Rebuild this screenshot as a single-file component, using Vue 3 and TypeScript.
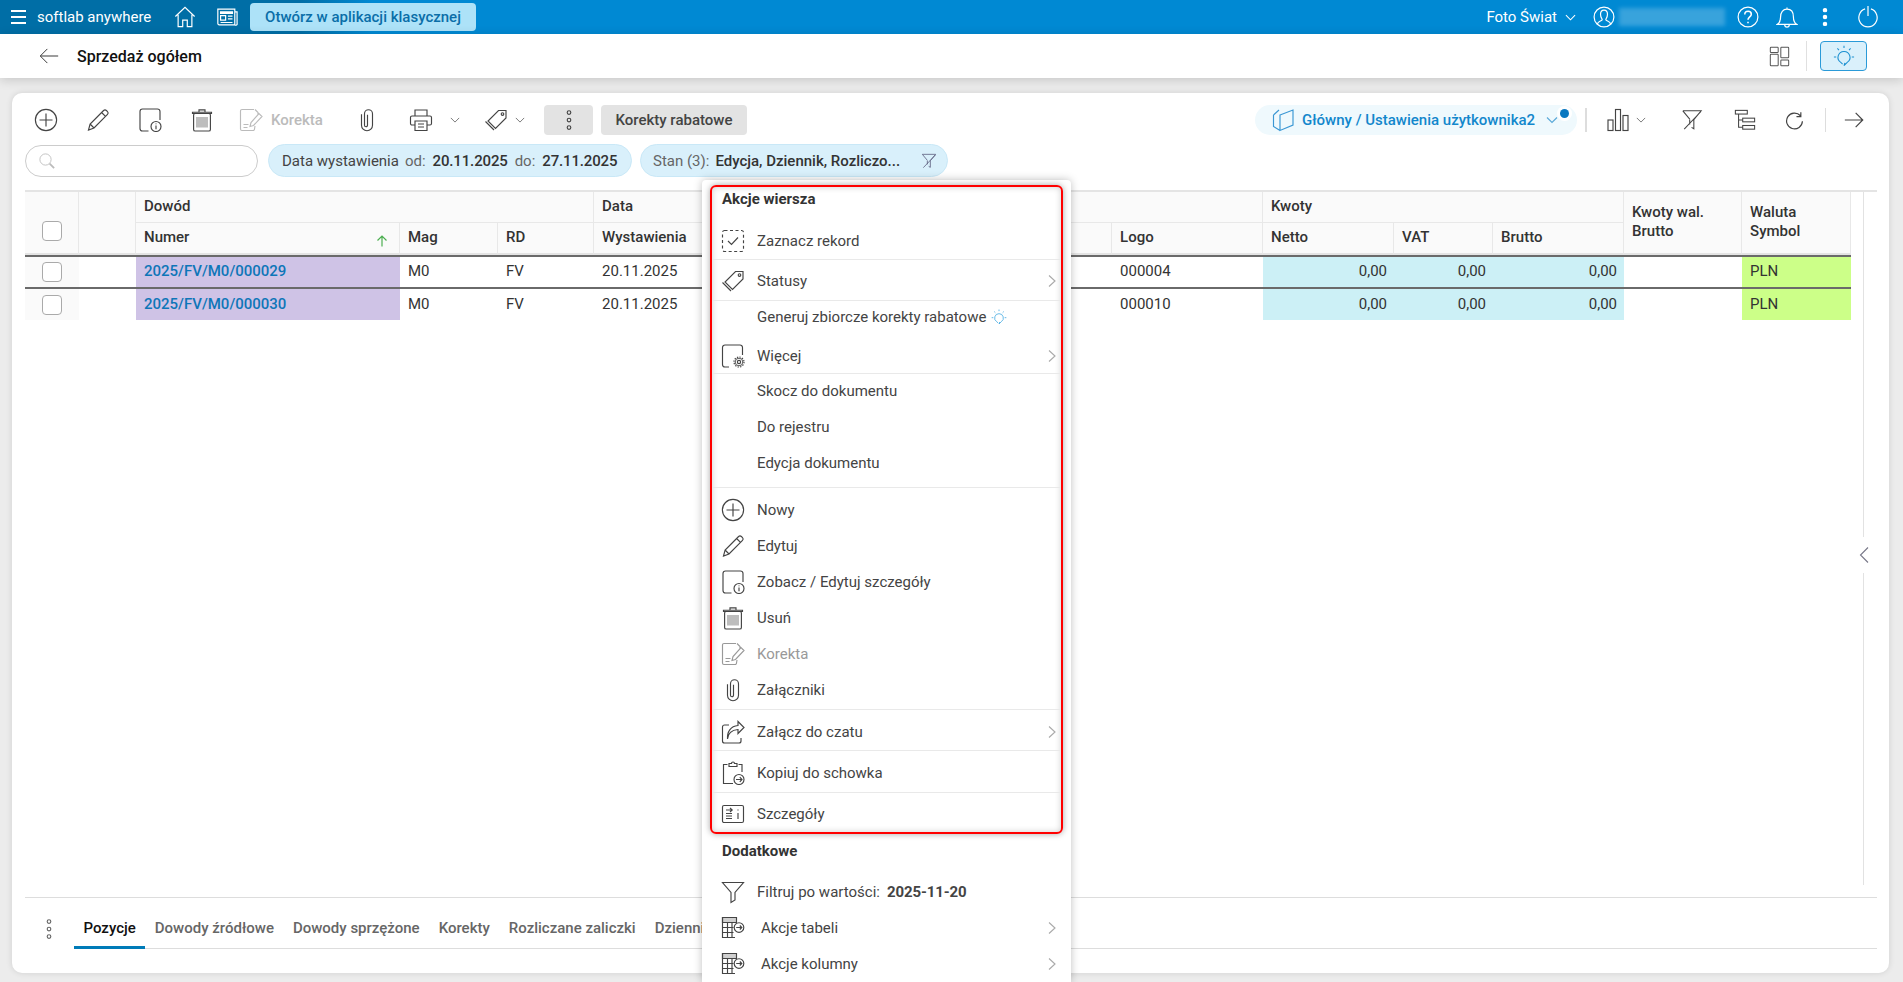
<script setup lang="ts">
interface Cell { text: string; cls?: string }
interface Item { label: string; icon?: string; cls?: string; more?: boolean; dim?: boolean; bulb?: boolean; value?: string }

const rows: Cell[][] = [
  [
    { text: '2025/FV/M0/000029', cls: 'link purple' }, { text: 'M0' }, { text: 'FV' }, { text: '20.11.2025' }, { text: '000004' },
    { text: '0,00', cls: 'num cyan' }, { text: '0,00', cls: 'num cyan' }, { text: '0,00', cls: 'num cyan' }, { text: '' }, { text: 'PLN', cls: 'lime' }
  ],
  [
    { text: '2025/FV/M0/000030', cls: 'link purple' }, { text: 'M0' }, { text: 'FV' }, { text: '20.11.2025' }, { text: '000010' },
    { text: '0,00', cls: 'num cyan' }, { text: '0,00', cls: 'num cyan' }, { text: '0,00', cls: 'num cyan' }, { text: '' }, { text: 'PLN', cls: 'lime' }
  ]
]

const tabs = ['Pozycje', 'Dowody źródłowe', 'Dowody sprzężone', 'Korekty', 'Rozliczane zaliczki', 'Dziennik']

const rowActions: Item[] = [
  { label: 'Zaznacz rekord', icon: 'i-check', cls: 'first sep' },
  { label: 'Statusy', icon: 'i-tags', cls: 'tall sep', more: true },
  { label: 'Generuj zbiorcze korekty rabatowe', cls: 'short', bulb: true },
  { label: 'Więcej', icon: 'i-gear', cls: 'tall-b sep', more: true },
  { label: 'Skocz do dokumentu', cls: 'up' },
  { label: 'Do rejestru', cls: 'up' },
  { label: 'Edycja dokumentu', cls: 'end sep' },
  { label: 'Nowy', icon: 'i-plus', cls: 'start' },
  { label: 'Edytuj', icon: 'i-pencil' },
  { label: 'Zobacz / Edytuj szczegóły', icon: 'i-info' },
  { label: 'Usuń', icon: 'i-trash' },
  { label: 'Korekta', icon: 'i-fix', dim: true },
  { label: 'Załączniki', icon: 'i-clip', cls: 'clip sep' },
  { label: 'Załącz do czatu', icon: 'i-share', cls: 'tall-c sep', more: true },
  { label: 'Kopiuj do schowka', icon: 'i-board', cls: 'tall-d sep' },
  { label: 'Szczegóły', icon: 'i-details', cls: 'last' }
]

const extraActions: Item[] = [
  { label: 'Filtruj po wartości:', icon: 'i-funnel', value: '2025-11-20' },
  { label: 'Akcje tabeli', icon: 'i-table', cls: 'inset', more: true },
  { label: 'Akcje kolumny', icon: 'i-table', cls: 'inset', more: true }
]
</script>

<template>
  <div class="page">
    <svg class="defs" aria-hidden="true">
      <defs>
        <symbol id="i-plus" viewBox="0 0 24 24"><circle cx="12" cy="12" r="10.6" /><path d="M12 5.5v13M5.5 12h13" /></symbol>
        <symbol id="i-pencil" viewBox="0 0 24 24"><path d="M2.5 22l1.6-6L17.6 2.5a2 2 0 0 1 2.8 0l1.1 1.1a2 2 0 0 1 0 2.8L8 20zM15.6 4.5l3.9 3.9M4.1 16L8 20" /></symbol>
        <symbol id="i-info" viewBox="0 0 24 24"><path d="M10.5 23H4.5A2.5 2.5 0 0 1 2 20.5V3.5A2.5 2.5 0 0 1 4.5 1h15A2.5 2.5 0 0 1 22 3.5V12" /><circle cx="18" cy="18.5" r="5" /><path d="M18 17.5v3.8M18 15.4v.9" /></symbol>
        <symbol id="i-trash" viewBox="0 0 24 24"><path d="M2.5 5.5V4.2h19v1.3zM9 4V1.8h6V4" /><rect x="3.6" y="5.5" width="16.8" height="17.5" rx="1.6" /><path d="M7 9v10.5M9 9v10.5M11 9v10.5M13 9v10.5M15 9v10.5M17 9v10.5" stroke-width=".7" /></symbol>
        <symbol id="i-fix" viewBox="0 0 24 24"><path d="M15 1.5H3A1.5 1.5 0 0 0 1.5 3v18A1.5 1.5 0 0 0 3 22.5h11A1.5 1.5 0 0 0 15.500 21l.5-3M16 1.500l3 3v2M4.500 16.500h5M4.500 19.500h4M11 18.500l1-4L20 5.500l3 3-8.500 9z" /></symbol>
        <symbol id="i-clip" viewBox="0 0 24 24"><path d="M6.500 6v11a5.500 5.500 0 0 0 11 0V5.500a4 4 0 0 0-8 0V17a1.500 1.500 0 0 0 3 .0V6.500" transform="translate(0 .2)" /></symbol>
        <symbol id="i-print" viewBox="0 0 24 24"><path d="M6 8V2h12v6M6 17H3a1.500 1.500 0 0 1-1.500-1.500v-6A1.500 1.500 0 0 1 3 8h18a1.500 1.500 0 0 1 1.500 1.500v6A1.500 1.500 0 0 1 21 17h-3" /><path d="M6 13h12v9.500H6zM9 16h6M9 19h6" /></symbol>
        <symbol id="i-tags" viewBox="0 0 24 24"><path d="M14.500 2.500h7.500v7.500L11.500 20.500 4 13zM1.500 13.500L10 22" /><circle cx="18.500" cy="6" r="1.300" /></symbol>
        <symbol id="i-chev-d" viewBox="0 0 12 12"><path d="M1 3.500l5 5 5-5" /></symbol>
        <symbol id="i-chev-r" viewBox="0 0 12 12"><path d="M3 .5l6 5.500-6 5.500" /></symbol>
        <symbol id="i-kebab" viewBox="0 0 24 24"><circle cx="12" cy="4.500" r="1.800" /><circle cx="12" cy="12" r="1.800" /><circle cx="12" cy="19.500" r="1.800" /></symbol>
        <symbol id="i-lens" viewBox="0 0 24 24"><circle cx="10" cy="10" r="7.500" /><path d="M15.500 15.500l6 6" stroke-width="2.400" /></symbol>
        <symbol id="i-funnel" viewBox="0 0 24 24"><path d="M1.500 2.500h21L14 12.500V20l-4 2.500v-10z" /></symbol>
        <symbol id="i-funnel-off" viewBox="0 0 24 24"><path d="M2 2h20l-8 9.500v10l-2.500-1.500M3.500 22L21.500 3M2 2l7.500 9M9.500 11.500V17" /></symbol>
        <symbol id="i-bars" viewBox="0 0 24 24"><rect x="2" y="12" width="5" height="10.500" /><rect x="9.500" y="1.500" width="5" height="21" /><rect x="17" y="7.500" width="5" height="15" /></symbol>
        <symbol id="i-tree" viewBox="0 0 24 24"><rect x="1.500" y="1.500" width="13" height="4" /><rect x="9.500" y="10" width="13" height="4" /><rect x="9.500" y="18" width="13" height="4" /><path d="M5 5.500V20h4.500M5 12h4.500" /></symbol>
        <symbol id="i-refresh" viewBox="0 0 24 24"><path d="M19.500 6A10 10 0 1 0 22 13M20 1.500V7h-5.500" /></symbol>
        <symbol id="i-arrow-r" viewBox="0 0 24 24"><path d="M1 12h21M14 3.500L22.500 12 14 20.500" /></symbol>
        <symbol id="i-arrow-l" viewBox="0 0 24 24"><path d="M23 12H2M10 3.500L1.500 12 10 20.500" /></symbol>
        <symbol id="i-book" viewBox="0 0 24 24"><path d="M9 7L22 2V17L9 22.500zM2.500 7L8 2M2.500 7V18.500L9 22.500" /></symbol>
        <symbol id="i-check" viewBox="0 0 24 24"><rect x="1.500" y="1.500" width="21" height="21" rx="2" stroke-dasharray="3 2.500" /><path d="M7 12l3.500 3.500L17 8.500" /></symbol>
        <symbol id="i-gear" viewBox="0 0 24 24"><path d="M8 23H4a2.500 2.500 0 0 1-2.500-2.500v-17A2.500 2.500 0 0 1 4 1h15a2.500 2.500 0 0 1 2.500 2.500V11" /><circle cx="18" cy="18" r="1.600" /><circle cx="18" cy="18" r="3.800" stroke-width=".9" /><circle cx="18" cy="18" r="5" stroke-dasharray="1.300 1.300" stroke-width="1.200" /></symbol>
        <symbol id="i-share" viewBox="0 0 24 24"><path d="M8 5H3.500A2 2 0 0 0 1.500 7v14a2 2 0 0 0 2 2H18a2 2 0 0 0 2-2v-3M6.500 19c.5-6 4.500-9 10.500-9.500V13.500L23 7.500 17 1.500V5.500C9.500 6 6 12 6.500 19z" /></symbol>
        <symbol id="i-board" viewBox="0 0 24 24"><path d="M6.500 3.500H2.500v19H12M17.500 3.500h3.500V11" /><path d="M8 5.500V2.500h2.500a1.500 1.500 0 0 1 3 0H16v3z" /><circle cx="18" cy="18.500" r="5" /><path d="M15 18.500h6M18.800 16.200l2.200 2.300-2.200 2.300" /></symbol>
        <symbol id="i-details" viewBox="0 0 24 24"><rect x="1.500" y="3.500" width="21" height="17" rx="1.500" /><path d="M5 8h6M9 6l2.200 2L9 10M5 11.500h6M5 14h6M5 16.500h6M17 11v6M17 7.500v1" /></symbol>
        <symbol id="i-table" viewBox="0 0 24 24"><path d="M16 1.500H1.500v20H14M1.500 6.500h14M1.500 11.500h11M1.500 16.500h11M6.500 6.500v15M11 6.500v15" /><path d="M1.500 1.500h14v5h-14z" fill="currentColor" fill-opacity=".25" /><circle cx="18" cy="11.500" r="4.800" /><path d="M15.200 11.500h5.500M18.800 9.500l2 2-2 2" /></symbol>
        <symbol id="i-home" viewBox="0 0 24 24"><path d="M1.500 11.500L12 1.500l10.500 10M4.500 9.500v13h5v-7h5v7h5v-13" /></symbol>
        <symbol id="i-news" viewBox="0 0 24 24"><path d="M2 3.500h18.500v17H3.500A1.500 1.500 0 0 1 2 19zM20.500 6.500H23v12.500a1.500 1.500 0 0 1-2.500 1.500" /><path d="M5 6.500h13v1.500H5z" fill="currentColor" /><path d="M5 10.500h5.500v5H5zM13 11h5M13 14h5M5 18h13" /></symbol>
        <symbol id="i-user" viewBox="0 0 24 24"><circle cx="12" cy="12" r="10.800" /><path d="M4.800 20c0-3.500 5-3.500 5.200-5.200.1-.8-1.800-2.300-1.800-5.800 0-2.800 1.500-4.500 3.800-4.500s3.800 1.700 3.800 4.500c0 3.500-1.900 5-1.800 5.800.2 1.700 5.200 1.700 5.200 5.200" /></symbol>
        <symbol id="i-help" viewBox="0 0 24 24"><circle cx="12" cy="12" r="10.800" /><path d="M8.500 9.200c0-2.200 1.700-3.500 3.600-3.500 2.100 0 3.500 1.300 3.500 3.200 0 2.900-3.600 2.900-3.600 6M12 17.300v1.500" stroke-width="1.700" /></symbol>
        <symbol id="i-bell" viewBox="0 0 24 24"><path d="M1.500 20c2.600-1.800 3.500-3.800 3.500-8 0-5 2.500-8.500 7-8.500s7 3.500 7 8.500c0 4.200.9 6.200 3.500 8zM12 3.500V1.500M9.500 20.500a2.500 2.500 0 0 0 5 0" /></symbol>
        <symbol id="i-power" viewBox="0 0 24 24"><path d="M8.800 3.200a10 10 0 1 0 6.400 0M12 0v11" /></symbol>
        <symbol id="i-grid" viewBox="0 0 24 24"><rect x="1.500" y="1.500" width="9" height="6" rx=".8" /><rect x="1.500" y="9.500" width="9" height="13" rx=".8" /><rect x="13.500" y="1.500" width="9" height="12" rx=".8" /><rect x="13.500" y="16" width="9" height="6.500" rx=".8" /></symbol>
        <symbol id="i-bulb" viewBox="0 0 24 24"><path d="M12 7a6.500 6.500 0 0 1 3.500 12L12 22.500l1-3M12 7a6.500 6.500 0 0 0-3.500 12l2 1.800" /><path d="M12 .8v2.400M4.800 3.800l1.700 1.700M19.200 3.800l-1.700 1.700M1 13h2.500M20.500 13H23" /></symbol>
      </defs>
    </svg>

    <header class="topbar">
      <div class="brand">
        <span class="burger"><i></i><i></i><i></i></span>
        <span class="brand-name">softlab anywhere</span>
        <svg class="ic top-ic home"><use href="#i-home" /></svg>
        <svg class="ic top-ic news"><use href="#i-news" /></svg>
        <button class="classic">Otwórz w aplikacji klasycznej</button>
      </div>
      <div class="account">
        <span class="company">Foto Świat</span>
        <svg class="ic chev company-chev"><use href="#i-chev-d" /></svg>
        <svg class="ic top-ic user"><use href="#i-user" /></svg>
        <span class="blurred"></span>
        <svg class="ic top-ic help"><use href="#i-help" /></svg>
        <svg class="ic top-ic bell"><use href="#i-bell" /></svg>
        <svg class="ic top-ic kebab-top"><use href="#i-kebab" /></svg>
        <svg class="ic top-ic power"><use href="#i-power" /></svg>
      </div>
    </header>

    <div class="subbar">
      <svg class="ic back"><use href="#i-arrow-l" /></svg>
      <h1 class="title">Sprzedaż ogółem</h1>
      <svg class="ic grid-ic"><use href="#i-grid" /></svg>
      <span class="sub-sep"></span>
      <button class="bulb-btn"><svg class="ic"><use href="#i-bulb" /></svg></button>
    </div>

    <main class="content">
      <section class="card">
        <div class="toolbar">
          <button class="tool"><svg class="ic"><use href="#i-plus" /></svg></button>
          <button class="tool"><svg class="ic"><use href="#i-pencil" /></svg></button>
          <button class="tool"><svg class="ic"><use href="#i-info" /></svg></button>
          <button class="tool"><svg class="ic"><use href="#i-trash" /></svg></button>
          <button class="tool fix"><svg class="ic"><use href="#i-fix" /></svg><span>Korekta</span></button>
          <button class="tool"><svg class="ic"><use href="#i-clip" /></svg></button>
          <button class="tool print"><svg class="ic"><use href="#i-print" /></svg><svg class="ic chev"><use href="#i-chev-d" /></svg></button>
          <button class="tool tag"><svg class="ic"><use href="#i-tags" /></svg><svg class="ic chev"><use href="#i-chev-d" /></svg></button>
          <button class="grey kebab"><svg class="ic"><use href="#i-kebab" /></svg></button>
          <button class="grey rabat">Korekty rabatowe</button>
          <div class="tool-right">
            <div class="view-pill">
              <svg class="ic"><use href="#i-book" /></svg>
              <span>Główny / Ustawienia użytkownika2</span>
              <svg class="ic chev"><use href="#i-chev-d" /></svg>
              <i class="dot"></i>
            </div>
            <span class="vsep first"></span>
            <button class="tool chart"><svg class="ic"><use href="#i-bars" /></svg><svg class="ic chev"><use href="#i-chev-d" /></svg></button>
            <button class="tool t-filter"><svg class="ic"><use href="#i-funnel-off" /></svg></button>
            <button class="tool t-tree"><svg class="ic"><use href="#i-tree" /></svg></button>
            <button class="tool t-refresh"><svg class="ic"><use href="#i-refresh" /></svg></button>
            <span class="vsep second"></span>
            <button class="tool t-arrow"><svg class="ic"><use href="#i-arrow-r" /></svg></button>
          </div>
        </div>

        <div class="filters">
          <div class="search"><svg class="ic"><use href="#i-lens" /></svg></div>
          <div class="chip date">
            <span class="chip-name">Data wystawienia</span>
            <span class="chip-label">od:</span><b>20.11.2025</b>
            <span class="chip-label">do:</span><b>27.11.2025</b>
          </div>
          <div class="chip state">
            <span class="chip-label">Stan (3):</span><b>Edycja, Dziennik, Rozliczo...</b>
            <svg class="ic chip-funnel"><use href="#i-funnel-off" /></svg>
          </div>
        </div>

        <div class="grid-area">
          <div class="table-wrap">
            <table class="data">
              <colgroup>
                <col class="c-check" /><col class="c-blank" /><col class="c-num" /><col class="c-mag" /><col class="c-rd" />
                <col class="c-date" /><col class="c-logo" /><col class="c-net" /><col class="c-vat" /><col class="c-gross" />
                <col class="c-wal" /><col class="c-cur" />
              </colgroup>
              <thead>
                <tr class="h1">
                  <th rowspan="2" class="check-h"><span class="box"></span></th>
                  <th rowspan="2"></th>
                  <th colspan="3">Dowód</th>
                  <th colspan="2">Data</th>
                  <th colspan="3">Kwoty</th>
                  <th rowspan="2" class="stack">Kwoty wal.<br />Brutto</th>
                  <th rowspan="2" class="stack">Waluta<br />Symbol</th>
                </tr>
                <tr class="h2">
                  <th class="sorted">Numer<svg class="sort" viewBox="0 0 12 12"><path d="M6 11.500V1M1.500 5.500L6 1l4.500 4.500" /></svg></th>
                  <th>Mag</th><th>RD</th><th>Wystawienia</th><th>Logo</th><th>Netto</th><th>VAT</th><th>Brutto</th>
                </tr>
              </thead>
              <tbody>
                <tr v-for="(row, i) in rows" :key="i">
                  <td class="check-c"><span class="box"></span></td>
                  <td></td>
                  <td v-for="(cell, j) in row" :key="j" :class="cell.cls">{{ cell.text }}</td>
                </tr>
              </tbody>
            </table>
          </div>
          <div class="rail">
            <i class="rail-line upper"></i>
            <svg class="rail-chev" viewBox="0 0 10 16"><path d="M9 .5L1.500 8 9 15.500" /></svg>
            <i class="rail-line"></i>
          </div>
        </div>

        <nav class="tabs">
          <svg class="ic tabs-kebab"><use href="#i-kebab" /></svg>
          <a v-for="(t, i) in tabs" :key="t" class="tab" :class="{ active: i === 0 }">{{ t }}</a>
        </nav>
      </section>
    </main>

    <aside class="menu">
      <div class="group marked">
        <div class="head">Akcje wiersza</div>
        <div v-for="it in rowActions" :key="it.label" class="item" :class="[it.cls, { dim: it.dim }]">
          <span class="item-ic"><svg v-if="it.icon" class="ic"><use :href="'#' + it.icon" /></svg></span>
          <span class="item-text">{{ it.label }}</span>
          <svg v-if="it.bulb" class="ic mini-bulb"><use href="#i-bulb" /></svg>
          <svg v-if="it.more" class="ic more"><use href="#i-chev-r" /></svg>
        </div>
      </div>
      <div class="group">
        <div class="head extra">Dodatkowe</div>
        <div v-for="it in extraActions" :key="it.label" class="item" :class="it.cls">
          <span class="item-ic"><svg v-if="it.icon" class="ic"><use :href="'#' + it.icon" /></svg></span>
          <span class="item-text">{{ it.label }}</span>
          <b v-if="it.value" class="item-value">{{ it.value }}</b>
          <svg v-if="it.more" class="ic more"><use href="#i-chev-r" /></svg>
        </div>
      </div>
    </aside>
  </div>
</template>

<style>
html, body { margin: 0; height: 100%; overflow: hidden; }
</style>

<style scoped>
.page {
  position: relative;
  width: 1903px;
  height: 982px;
  overflow: hidden;
  display: flex;
  flex-direction: column;
  background: #ececec;
  font-family: Roboto, "Liberation Sans", sans-serif;
  font-size: 15px;
  color: #333;
}
.defs { position: absolute; width: 0; height: 0; }
button { font: inherit; border: 0; padding: 0; background: none; color: inherit; }
.ic {
  width: 24px;
  height: 24px;
  fill: none;
  stroke: currentColor;
  stroke-width: 1.15;
  flex: none;
  display: block;
}
.chev { width: 10px; height: 10px; color: #777; }

/* top bar */
.topbar {
  height: 34px;
  flex: none;
  display: flex;
  justify-content: space-between;
  background: linear-gradient(90deg, #006ea6 0, #006ea6 300px, #0089d3 372px);
  color: #fff;
}
.brand, .account { display: flex; align-items: center; }
.burger { width: 15px; margin-left: 11px; display: flex; flex-direction: column; gap: 4px; }
.burger i { height: 2px; background: #fff; }
.brand-name { margin-left: 11px; font-size: 15px; width: 115px; white-space: nowrap; }
.top-ic { width: 22px; height: 22px; stroke-width: 1.3; }
.home { margin-left: 22px; }
.news { margin-left: 20px; }
.classic {
  margin-left: 12px;
  width: 226px;
  height: 28px;
  border-radius: 4px;
  background: #ade2f8;
  color: #0a6ea8;
  font-weight: 500;
}
.company { font-size: 15px; }
.account .chev { color: #fff; }
.company-chev { margin-left: 8px; width: 11px; height: 11px; }
.user { margin-left: 17px; }
.blurred { width: 106px; height: 18px; margin-left: 4px; background: rgba(255, 255, 255, .22); filter: blur(2px); }
.help { margin-left: 12px; }
.bell { margin-left: 17px; }
.kebab-top { margin-left: 16px; fill: #fff; }
.power { margin-left: 21px; margin-right: 24px; }

/* sub bar */
.subbar {
  position: relative;
  height: 44px;
  flex: none;
  display: flex;
  align-items: center;
  background: #fff;
  box-shadow: 0 2px 10px rgba(0, 0, 0, .16);
}
.back { margin-left: 39px; width: 20px; height: 20px; color: #333; }
.title { margin: 0 0 0 18px; font-size: 16px; font-weight: 500; color: #111; flex: 1; }
.grid-ic { width: 21px; height: 21px; color: #555; }
.sub-sep { width: 1px; height: 30px; margin: 0 13px 0 16px; background: #e0e0e0; }
.bulb-btn {
  width: 47px;
  height: 30px;
  margin-right: 36px;
  display: flex;
  align-items: center;
  justify-content: center;
  background: #daf0fb;
  border: 1px solid #2a9ad8;
  border-radius: 4px;
  color: #1a8fd0;
}
.bulb-btn .ic { width: 22px; height: 22px; }

/* card */
.content { flex: 1; padding: 15px 14px 9px 12px; min-height: 0; display: flex; }
.card {
  flex: 1;
  display: flex;
  flex-direction: column;
  background: #fff;
  border-radius: 10px;
  padding: 12px 0 24px 13px;
  box-shadow: 0 0 6px rgba(0, 0, 0, .12);
  min-width: 0;
}
.toolbar { display: flex; align-items: center; height: 30px; flex: none; color: #444; }
.tool { width: 42px; height: 30px; margin-right: 10px; display: flex; align-items: center; justify-content: center; color: #444; flex: none; }
.fix { width: 103px; justify-content: flex-start; padding-left: 6px; color: #bbb; box-sizing: border-box; gap: 8px; font-weight: 500; margin-right: 10px; }
.print { width: 74px; justify-content: flex-start; padding-left: 11px; gap: 17px; box-sizing: border-box; }
.tag { width: 52px; justify-content: flex-start; padding-left: 2px; gap: 7px; box-sizing: border-box; }
.grey { height: 30px; background: #e3e3e3; border-radius: 4px; color: #444; display: flex; align-items: center; justify-content: center; flex: none; font-weight: 500; }
.kebab { width: 49px; margin-right: 8px; }
.kebab .ic { width: 24px; height: 24px; }
.rabat { width: 146px; }
.tool-right { margin-left: auto; display: flex; align-items: center; }
.tool-right .tool { margin-right: 0; }
.view-pill {
  position: relative;
  width: 322px;
  height: 30px;
  box-sizing: border-box;
  border-radius: 15px;
  background: #eff9fd;
  color: #1287cc;
  display: flex;
  align-items: center;
  padding-left: 16px;
  font-weight: 500;
  white-space: nowrap;
}
.view-pill .ic { width: 24px; height: 24px; color: #3a97d4; }
.view-pill .ic.chev { width: 12px; height: 12px; margin-left: 11px; color: #5aa9d8; }
.view-pill span { margin-left: 7px; }
.dot {
  position: absolute;
  right: 8px;
  top: 4px;
  width: 9px;
  height: 9px;
  border-radius: 50%;
  background: #0a78c0;
  box-shadow: 0 0 0 3px #fff;
}
.vsep { width: 1px; height: 24px; background: #ddd; flex: none; }
.vsep.first { margin-left: 8px; width: 2px; }
.chart { width: 68px; justify-content: flex-start; padding-left: 19px; gap: 6px; box-sizing: border-box; }
.t-filter { margin-left: 16px; }
.t-tree { margin-left: 11px; }
.t-refresh { margin-left: 7px; }
.vsep.second { margin-left: 10px; }
.t-arrow { margin-left: 7px; margin-right: 14px !important; }
.t-filter .ic { width: 22px; height: 22px; }
.t-tree .ic { width: 22px; height: 22px; }
.t-refresh .ic { width: 19px; height: 19px; stroke-width: 1.5; }
.t-arrow .ic { width: 20px; height: 20px; stroke-width: 1.4; }

/* filters */
.filters { display: flex; align-items: center; gap: 10px; height: 33px; margin-top: 9px; flex: none; }
.search {
  width: 233px;
  height: 32px;
  box-sizing: border-box;
  border: 1px solid #ccc;
  border-radius: 16px;
  color: #bbb;
  display: flex;
  align-items: center;
  padding-left: 12px;
}
.search .ic { width: 18px; height: 18px; }
.chip {
  height: 33px;
  box-sizing: border-box;
  border: 1px solid #c9e8f7;
  border-radius: 17px;
  background: #d9f0fb;
  display: flex;
  align-items: center;
  white-space: nowrap;
  flex: none;
}
.chip b { font-weight: 500; color: #333; }
.chip-label { color: #666; }
.chip.date { width: 364px; padding-left: 13px; }
.chip-name { margin-right: 6px; color: #444; }
.chip.date b { margin-left: 7px; margin-right: 7px; letter-spacing: -.15px; }
.chip.state { width: 308px; margin-left: -2px; padding-left: 12px; position: relative; }
.chip.state b { margin-left: 6px; }
.chip-funnel { width: 16px; height: 16px; color: #557; margin-left: auto; margin-right: 10px; }

/* table */
.grid-area { flex: 1; display: flex; margin-top: 13px; min-height: 0; border-top: 2px solid #e4e4e4; margin-right: 12px; }
.table-wrap { width: 1826px; flex: none; }
.data { width: 1826px; table-layout: fixed; border-collapse: separate; border-spacing: 0; }
.c-check { width: 54px; } .c-blank { width: 57px; } .c-num { width: 264px; } .c-mag { width: 98px; } .c-rd { width: 96px; }
.c-date { width: 518px; } .c-logo { width: 151px; } .c-net { width: 131px; } .c-vat { width: 99px; } .c-gross { width: 131px; }
.c-wal { width: 118px; } .c-cur { width: 109px; }
th {
  background: #fafafa;
  font-weight: 500;
  text-align: left;
  color: #333;
  padding: 0 8px 2px;
  border-right: 1px solid #e8e8e8;
  line-height: 19px;
  box-sizing: border-box;
  border-bottom: 1px solid #e8e8e8;
}
.h1 th { height: 31px; }
.h2 th { height: 32px; position: relative; }
thead tr:last-child th, th[rowspan] { border-bottom: 2px solid #e4e4e4; }
.sort { position: absolute; right: 11px; top: 12px; width: 12px; height: 12px; fill: none; stroke: #4caf50; stroke-width: 1.2; }
.check-h { vertical-align: bottom; padding-bottom: 12px; }
.box { display: block; width: 20px; height: 20px; box-sizing: border-box; border: 1px solid #aaa; border-radius: 4px; background: #fff; margin-left: 9px; }
td {
  height: 32px;
  padding: 0 8px 2px;
  box-sizing: border-box;
  border-top: 2px solid #6a6a6a;
  color: #333;
  overflow: hidden;
  white-space: nowrap;
}
tbody tr:last-child td { height: 33px; }
.check-c { background: #fafafa; padding-bottom: 0; }
.link { color: #0e76b8; font-weight: 500; }
.purple { background: #cfc3e6; }
.cyan { background: #ccf0f6; }
.lime { background: #ccff88; }
.num { text-align: right; padding-right: 7px; }
.rail { width: 1px; margin-left: 12px; height: 693px; display: flex; flex-direction: column; align-items: center; flex: none; }
.rail-line { flex: 1; width: 1px; background: #e2e2e2; }
.rail-line.upper { flex: none; height: 345px; }
.rail-chev { width: 10px; height: 16px; margin: 10px 0; fill: none; stroke: #778; stroke-width: 1.1; flex: none; }

/* tabs */
.tabs {
  flex: none;
  height: 52px;
  box-sizing: border-box;
  margin-right: 12px;
  border-top: 1px solid #ddd;
  display: flex;
  align-items: flex-end;
  position: relative;
  margin-top: 10px;
  padding-left: 49px;
}
.tabs::after { content: ""; position: absolute; left: 49px; right: 0; bottom: 0; height: 1px; background: #ddd; }
.tabs-kebab { position: absolute; left: 12px; top: 19px; width: 24px; height: 24px; color: #666; }
.tab { height: 50px; box-sizing: border-box; padding: 20px 9.5px 0; font-weight: 500; color: #666; white-space: nowrap; position: relative; z-index: 1; line-height: 18px; }
.tab.active { color: #111; border-bottom: 3px solid #007bb8; }

/* menu */
.menu {
  position: absolute;
  left: 702px;
  top: 180px;
  width: 369px;
  height: 802px;
  box-sizing: border-box;
  padding: 5px 8px 0;
  background: #fff;
  box-shadow: 0 0 8px rgba(0, 0, 0, .25);
  border-radius: 4px 4px 0 0;
  color: #444;
  z-index: 5;
}
.group { border: 2px solid transparent; }
.group.marked {
  border-color: #f00;
  border-radius: 6px;
  box-shadow: 0 0 6px rgba(0, 0, 0, .35), inset 0 0 6px rgba(0, 0, 0, .2);
}
.head { height: 36px; padding-left: 10px; line-height: 24px; font-weight: 700; color: #333; }
.head.extra { height: 38px; line-height: 30px; }
.item {
  display: flex;
  align-items: center;
  height: 36px;
  box-sizing: border-box;
  padding-left: 9px;
  position: relative;
}
.item.sep { border-bottom: 1px solid #e9e9e9; }
.item.first { height: 37px; }
.item.tall { height: 41px; padding-top: 1px; }
.item.short { height: 32px; }
.item.tall-b { height: 41px; padding-top: 6px; }
.item.up { padding-bottom: 2px; }
.item.end { height: 42px; padding-bottom: 7px; }
.item.start { height: 40px; padding-top: 4px; }
.item.clip { height: 38px; padding-bottom: 1px; }
.item.tall-c { height: 41px; padding-top: 4px; }
.item.tall-d { height: 42px; padding-top: 2px; }
.item.last { height: 39px; padding-top: 2px; }
.item.dim { color: #999; }
.item-ic { width: 24px; flex: none; margin-right: 12px; height: 24px; }
.item.inset .item-ic { margin-right: 16px; }
.item-value { margin-left: 7px; font-weight: 700; color: #444; letter-spacing: -.1px; }
.mini-bulb { width: 16px; height: 16px; margin-left: 5px; color: #3aa6e0; }
.more { position: absolute; right: 3px; width: 12px; height: 12px; color: #aaa; }
</style>
